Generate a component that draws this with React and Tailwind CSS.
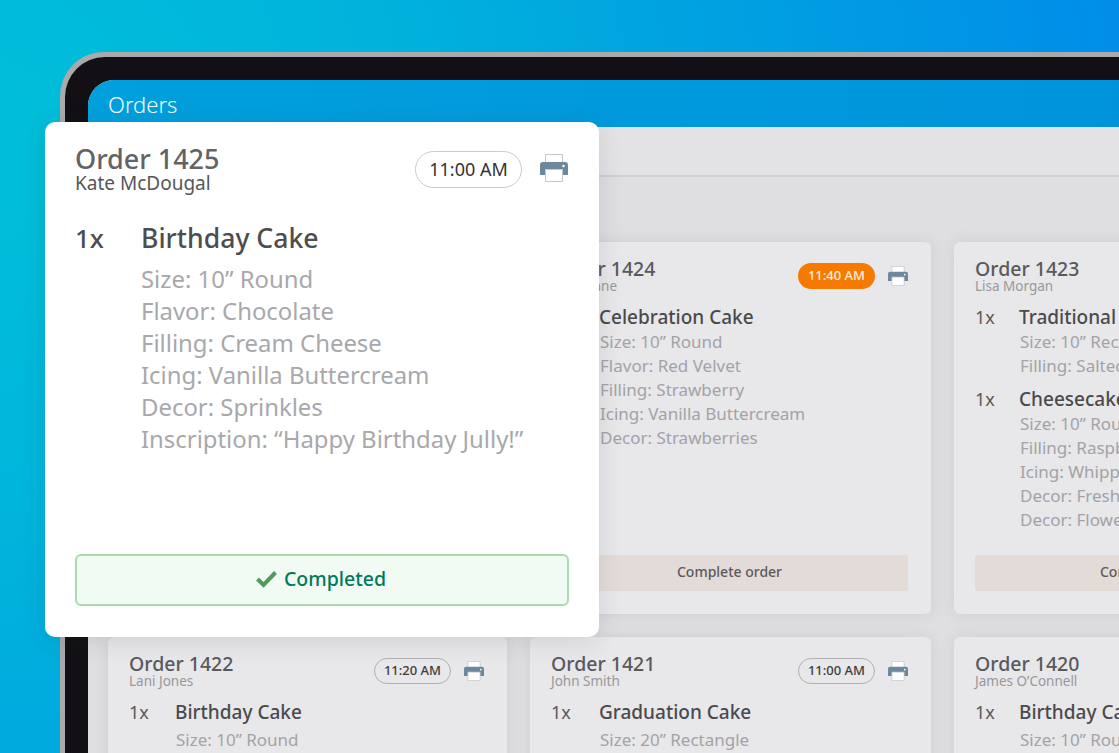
const FONT = "font-['Noto_Sans','Open_Sans',sans-serif]";

function PrinterIcon({ className }) {
  return (
    <svg viewBox="0 0 28 28" className={className}>
      <rect x="5.5" y="0.5" width="17" height="10" fill="#ffffff" stroke="#c4c7cb" />
      <path d="M3 8h22a3 3 0 0 1 3 3v10h-28v-10a3 3 0 0 1 3-3z" fill="#6d879c" />
      <rect x="5.5" y="15.5" width="17" height="12" fill="#ffffff" stroke="#c4c7cb" />
      <circle cx="23.5" cy="12" r="1.2" fill="#ffffff" />
    </svg>
  );
}

const ORDERS_ROW_1 = [
  {
    id: 1425,
    name: "Kate McDougal",
    time: "11:00 AM",
    qtyWidth: "w-[46px]",
    items: [{ title: "Birthday Cake", lines: ["Size: 10” Round", "Flavor: Chocolate"] }],
  },
  {
    id: 1424,
    name: "Katie Lane",
    time: "11:40 AM",
    late: true,
    qtyWidth: "w-[48px]",
    items: [
      {
        title: "Celebration Cake",
        lines: ["Size: 10” Round", "Flavor: Red Velvet", "Filling: Strawberry", "Icing: Vanilla Buttercream", "Decor: Strawberries"],
      },
    ],
  },
  {
    id: 1423,
    name: "Lisa Morgan",
    time: "11:40 AM",
    qtyWidth: "w-[44px]",
    items: [
      { title: "Traditional Cake", lines: ["Size: 10” Rectangle", "Filling: Salted Caramel"] },
      {
        title: "Cheesecake",
        lines: ["Size: 10” Round", "Filling: Raspberry", "Icing: Whipped Cream", "Decor: Fresh Fruit", "Decor: Flowers"],
      },
    ],
  },
];

const ORDERS_ROW_2 = [
  { id: 1422, name: "Lani Jones", time: "11:20 AM", qtyWidth: "w-[46px]", items: [{ title: "Birthday Cake", lines: ["Size: 10” Round"] }] },
  { id: 1421, name: "John Smith", time: "11:00 AM", qtyWidth: "w-[48px]", items: [{ title: "Graduation Cake", lines: ["Size: 20” Rectangle"] }] },
  { id: 1420, name: "James O’Connell", time: "11:00 AM", qtyWidth: "w-[44px]", items: [{ title: "Birthday Cake", lines: ["Size: 10” Round"] }] },
];

function OrderCard({ order, withButton }) {
  return (
    <div className="flex h-full flex-col rounded-md bg-[#e8e7ea] pt-[15px] pr-[23px] pb-[23px] pl-[21px] shadow-[0_0_14px_rgba(120,120,125,0.16)]">
      <div className="flex items-start justify-between">
        <div>
          <div className="text-[19.5px] leading-[24px] font-medium text-[#59595c]">Order {order.id}</div>
          <div className="-mt-[3px] text-[13.5px] leading-[16px] text-[#98989c]">{order.name}</div>
        </div>
        <div className="mt-[6px] flex items-center gap-[13px]">
          <span
            className={
              order.late
                ? "flex h-[26px] w-[77px] items-center justify-center rounded-full bg-[#f67a00] text-[13px] font-medium text-[#fbeee0]"
                : "flex h-[26px] w-[77px] items-center justify-center rounded-full border border-[#b0b0b4] text-[13px] font-medium text-[#3d3d40]"
            }
          >
            {order.time}
          </span>
          <PrinterIcon className="h-[20px] w-[20px]" />
        </div>
      </div>
      <div className="mt-[11px] flex flex-col gap-[9px]">
        {order.items.map((item) => (
          <div key={item.title} className="flex">
            <span className={`${order.qtyWidth} shrink-0 text-[18px] leading-[24px] text-[#59595c]`}>1x</span>
            <div>
              <div className={withButton ? "mb-[1px] whitespace-nowrap text-[19px] leading-[24px] font-medium text-[#4a4a4d]" : "mb-[4px] whitespace-nowrap text-[19px] leading-[24px] font-medium text-[#4a4a4d]"}>
                {item.title}
              </div>
              {item.lines.map((line) => (
                <div key={line} className="ml-[1px] whitespace-nowrap text-[17px] leading-[24px] text-[#a3a3a7]">{line}</div>
              ))}
            </div>
          </div>
        ))}
      </div>
      {withButton && (
        <div className="mt-auto flex h-[36px] items-center justify-center rounded-[3px] bg-[#e3dbd8] pb-[3px] text-[14px] font-medium text-[#5c5a5a]">
          Complete order
        </div>
      )}
    </div>
  );
}

export default function App() {
  return (
    <div className={`${FONT} relative h-[753px] w-[1119px] overflow-hidden bg-[radial-gradient(circle_at_-2%_20%,#00bfd9_0%,#00b4dc_30%,#00a3e0_55%,#0090e8_85%,#0088ee_100%)] pt-[52px] pl-[60px]`}>
      {/* Tablet frame */}
      <div className="h-[800px] w-[1200px] rounded-tl-[44px] bg-[#aaa9ab] pt-[5px] pl-[5px]">
        <div className="h-full rounded-tl-[40px] bg-[#121014] pt-[23px] pl-[23px]">
          <div className="h-full overflow-hidden rounded-tl-[26px] bg-[#dfdee1]">
            <div className="flex h-[47px] items-center bg-[linear-gradient(90deg,#00a0dc,#0092dc)] pt-[1px] pl-[20px] text-[22px] font-light text-[#f4fbfe]">
              Orders
            </div>
            <div className="h-[50px] border-b-2 border-[#cfced1] bg-[#e3e2e5]" />
            <div className="grid grid-cols-[399px_401px_399px] gap-[23px] pt-[65px] pl-[20px]">
              {ORDERS_ROW_1.map((order) => (
                <div key={order.id} className="h-[372px]">
                  <OrderCard order={order} withButton />
                </div>
              ))}
              {ORDERS_ROW_2.map((order) => (
                <div key={order.id} className="h-[200px]">
                  <OrderCard order={order} />
                </div>
              ))}
            </div>
          </div>
        </div>
      </div>

      {/* Focused order */}
      <div className="absolute top-[122px] left-[45px] flex h-[515px] w-[554px] flex-col rounded-[10px] bg-white px-[30px] pt-[21px] pb-[31px] shadow-[0_4px_24px_rgba(40,50,60,0.12)]">
        <div className="flex items-start justify-between">
          <div>
            <div className="text-[27px] leading-[32px] font-medium text-[#636366]">Order 1425</div>
            <div className="-mt-[4px] text-[19px] leading-[24px] text-[#56565a]">Kate McDougal</div>
          </div>
          <div className="mt-[8px] mr-[1px] flex items-center gap-[18px]">
            <span className="flex h-[37px] w-[107px] items-center justify-center rounded-full border border-[#cbcbcf] text-[18px] text-[#333336]">
              11:00 AM
            </span>
            <PrinterIcon className="-mt-[4px] h-[28px] w-[28px]" />
          </div>
        </div>
        <div className="mt-[26px] flex">
          <span className="w-[66px] shrink-0 text-[26px] leading-[34px] font-medium text-[#4d4d50]">1x</span>
          <div>
            <div className="text-[26.6px] leading-[34px] font-medium text-[#4d4d50]">Birthday Cake</div>
            <div className="mt-[8px] text-[23.9px] leading-[32px] text-[#a8a8ac]">
              <div>Size: 10” Round</div>
              <div>Flavor: Chocolate</div>
              <div>Filling: Cream Cheese</div>
              <div>Icing: Vanilla Buttercream</div>
              <div>Decor: Sprinkles</div>
              <div>Inscription: “Happy Birthday Jully!”</div>
            </div>
          </div>
        </div>
        <div className="mt-auto flex h-[52px] items-center justify-center gap-[6px] rounded-[6px] border-2 border-[#a9dab0] bg-[#f1fbf4] pr-[3px] pb-[2px] text-[19.5px] font-medium text-[#00795c]">
          <svg viewBox="0 0 22 18" className="h-[18px] w-[23px]">
            <path d="M2 9l6 6L20 2.5" fill="none" stroke="#4f9a5c" strokeWidth="4" />
          </svg>
          Completed
        </div>
      </div>
    </div>
  );
}
